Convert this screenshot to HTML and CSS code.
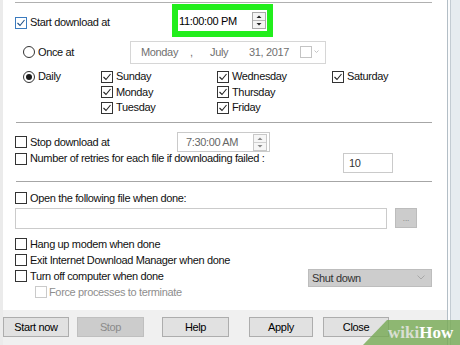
FILE: index.html
```html
<!DOCTYPE html>
<html>
<head>
<meta charset="utf-8">
<link rel="stylesheet" href="styles.css">
</head>
<body>
<div class="screen">
  <div class="gutter"></div>
  <div class="main">
    <div class="panel">
      <div class="rule rule-top"></div>

      <div class="row-start">
        <label class="opt start"><span class="cb focus"><svg viewBox="0 0 10 10"><path d="M1.5 5 L4 7.5 L8.5 2"/></svg></span>Start download at</label>
        <div class="green">
          <span class="time-text">11:00:00 PM</span>
          <svg class="spin" viewBox="0 0 14 17"><rect x="0.5" y="0.5" width="13" height="16" fill="#f4f4f4" stroke="#a8a8a8"/><line x1="1" y1="8.5" x2="13" y2="8.5" stroke="#b8b8b8"/><path d="M4.5 6 L7 3.5 L9.5 6 Z" fill="#222"/><path d="M4.5 11 L7 13.5 L9.5 11 Z" fill="#222"/></svg>
        </div>
      </div>

      <div class="row-once">
        <label class="opt"><span class="rb"></span>Once at</label>
        <div class="date">
          <span class="d-day">Monday</span>
          <span class="d-comma">,</span>
          <span class="d-month">July</span>
          <span class="d-year">31, 2017</span>
          <svg class="cal" viewBox="0 0 20 12"><rect x="0.5" y="0.5" width="11" height="11" fill="none" stroke="#c4c4c4"/><path d="M14.5 4.5 L16.5 6.5 L18.5 4.5" fill="none" stroke="#c4c4c4"/></svg>
        </div>
      </div>

      <div class="days">
        <label class="opt"><span class="rb on"></span>Daily</label>
        <label class="opt"><span class="cb"><svg viewBox="0 0 10 10"><path d="M1.5 5 L4 7.5 L8.5 2"/></svg></span>Sunday</label>
        <label class="opt"><span class="cb"><svg viewBox="0 0 10 10"><path d="M1.5 5 L4 7.5 L8.5 2"/></svg></span>Wednesday</label>
        <label class="opt"><span class="cb"><svg viewBox="0 0 10 10"><path d="M1.5 5 L4 7.5 L8.5 2"/></svg></span>Saturday</label>
        <span></span>
        <label class="opt"><span class="cb"><svg viewBox="0 0 10 10"><path d="M1.5 5 L4 7.5 L8.5 2"/></svg></span>Monday</label>
        <label class="opt"><span class="cb"><svg viewBox="0 0 10 10"><path d="M1.5 5 L4 7.5 L8.5 2"/></svg></span>Thursday</label>
        <span></span>
        <span></span>
        <label class="opt"><span class="cb"><svg viewBox="0 0 10 10"><path d="M1.5 5 L4 7.5 L8.5 2"/></svg></span>Tuesday</label>
        <label class="opt"><span class="cb"><svg viewBox="0 0 10 10"><path d="M1.5 5 L4 7.5 L8.5 2"/></svg></span>Friday</label>
        <span></span>
      </div>

      <div class="rule sep1"></div>

      <div class="row-stop">
        <label class="opt"><span class="cb"></span>Stop download at</label>
        <div class="timebox">
          <span>7:30:00 AM</span>
          <svg class="spin" viewBox="0 0 14 17"><rect x="0.5" y="0.5" width="13" height="16" fill="#f6f6f6" stroke="#c8c8c8"/><line x1="1" y1="8.5" x2="13" y2="8.5" stroke="#d0d0d0"/><path d="M4.5 6 L7 3.5 L9.5 6 Z" fill="#8a8a8a"/><path d="M4.5 11 L7 13.5 L9.5 11 Z" fill="#8a8a8a"/></svg>
        </div>
      </div>

      <div class="row-retry">
        <label class="opt"><span class="cb"></span>Number of retries for each file if downloading failed :</label>
        <div class="num">10</div>
      </div>

      <div class="rule sep2"></div>

      <div class="row-open">
        <label class="opt"><span class="cb"></span>Open the following file when done:</label>
      </div>
      <div class="row-path">
        <div class="path"></div>
        <div class="browse">...</div>
      </div>

      <div class="checks">
        <div class="row-check"><label class="opt"><span class="cb"></span>Hang up modem when done</label></div>
        <div class="row-check"><label class="opt"><span class="cb"></span>Exit Internet Download Manager when done</label></div>
        <div class="row-check">
          <label class="opt"><span class="cb"></span>Turn off computer when done</label>
          <div class="combo"><span>Shut down</span><svg class="chev" viewBox="0 0 8 5"><path d="M0.5 0.5 L4 4 L7.5 0.5" fill="none" stroke="#a8a8a8"/></svg></div>
        </div>
        <div class="row-check row-force"><label class="opt disabled"><span class="cb"></span>Force processes to terminate</label></div>
      </div>
    </div>

    <div class="buttons">
      <div class="btn b-start">Start now</div>
      <div class="btn b-stop">Stop</div>
      <div class="btn b-help">Help</div>
      <div class="btn b-apply">Apply</div>
      <div class="btn b-close">Close</div>
    </div>
  </div>
  <div class="edge"></div>

  <div class="wm">
    <svg class="wm-bg" viewBox="0 0 97 25"><polygon points="0,25 24,0 97,0 97,25" fill="rgba(120,170,86,0.82)"/></svg>
    <span class="wm-text"><span class="wm-wiki">wiki</span><span class="wm-how">How</span></span>
  </div>
</div>
</body>
</html>
```

FILE: styles.css
```css
* { box-sizing: border-box; }

body {
  margin: 0;
  font-family: "Liberation Sans", Arial, sans-serif;
  font-size: 11px;
  letter-spacing: -0.35px;
  color: #111;
}

.screen {
  position: relative;
  width: 460px;
  height: 345px;
  display: flex;
  overflow: hidden;
  background: #f0f0f0;
}

.gutter {
  width: 3px;
  flex: none;
  background: #ebebeb;
}

.main {
  width: 444px;
  flex: none;
  display: flex;
  flex-direction: column;
}

.panel {
  height: 310px;
  flex: none;
  background: #fff;
  padding: 0 15px 0 12px;
  display: flex;
  flex-direction: column;
}

.edge {
  flex: 1;
  background: linear-gradient(to right, #b3bec6 0 1px, #fbfcfd 1px 3px, #c3ccd3 3px 4px, #e6ecf0 4px);
}

/* rules */
.rule {
  flex: none;
  height: 1px;
  width: 416px;
  margin-left: 1px;
  background: #a6a6a6;
}
.rule-top { margin-top: 2px; margin-left: 0; width: 417px; background: #b0b0b0; }
.sep1 { margin-top: 6.5px; }
.sep2 { margin-top: 7px; }

/* options */
.opt {
  display: flex;
  align-items: center;
  gap: 3px;
  white-space: nowrap;
  line-height: 13px;
}
.cb {
  width: 12px;
  height: 12px;
  flex: none;
  border: 1px solid #333;
  background: #fff;
  display: flex;
  align-items: center;
  justify-content: center;
}
.cb svg { width: 10px; height: 10px; }
.cb svg path { fill: none; stroke: #222; stroke-width: 1.1; }
.cb.focus { border-color: #3b7bbf; }
.cb.focus svg path { stroke: #1d4f86; }

.rb {
  width: 12px;
  height: 12px;
  flex: none;
  border: 1px solid #333;
  border-radius: 50%;
  background: #fff;
  display: flex;
  align-items: center;
  justify-content: center;
}
.rb.on::after {
  content: "";
  width: 6px;
  height: 6px;
  border-radius: 50%;
  background: #1a1a1a;
}

.disabled { color: #8e8e8e; }
.disabled .cb { border-color: #cacaca; }

/* row 1 */
.row-start {
  flex: none;
  height: 35px;
  display: grid;
  grid-template-columns: 157px 101px;
  align-items: center;
}
.start { margin-top: 4px; }
.green {
  width: 101px;
  height: 33px;
  border: 6px solid #22ee1c;
  background: #fff;
  display: flex;
  align-items: center;
  justify-content: space-between;
  padding: 0 1px 0 1px;
  color: #000;
}
.spin { width: 14px; height: 17px; display: block; }

/* row 2 */
.row-once {
  flex: none;
  height: 28px;
  display: grid;
  grid-template-columns: 107px 196px;
  padding-left: 8px;
  align-items: center;
}
.date {
  height: 23px;
  border: 1px solid #d6d6d6;
  display: flex;
  align-items: center;
  padding-left: 10px;
  color: #707070;
}
.d-day { width: 49px; }
.d-comma { width: 20px; }
.d-month { width: 39px; }
.d-year { width: 51px; }
.cal { width: 20px; height: 12px; display: block; }

/* days */
.days {
  flex: none;
  margin-top: 3px;
  display: grid;
  grid-template-columns: 78px 116px 115px auto;
  grid-auto-rows: 15.5px;
  padding-left: 8px;
  align-items: center;
}

/* stop */
.row-stop {
  flex: none;
  margin-top: 9px;
  height: 20px;
  display: grid;
  grid-template-columns: 162px 93px;
  align-items: center;
}
.timebox {
  height: 20px;
  border: 1px solid #cacaca;
  display: flex;
  align-items: center;
  justify-content: space-between;
  padding: 0 2px 0 8px;
  color: #666;
}

.row-retry {
  flex: none;
  height: 22px;
  display: grid;
  grid-template-columns: 328px 50px;
  align-items: start;
}
.num {
  margin-top: 1px;
  height: 20px;
  border: 1px solid #cacaca;
  padding: 2px 5px;
  line-height: 14px;
  color: #333;
}

/* open file */
.row-open {
  flex: none;
  margin-top: 6px;
  height: 20px;
  display: flex;
  align-items: center;
}
.row-path {
  flex: none;
  height: 21px;
  display: flex;
  align-items: flex-start;
}
.path {
  width: 372px;
  height: 21px;
  border: 1px solid #cbcbcb;
  background: #fff;
}
.browse {
  margin-left: 8px;
  width: 22px;
  height: 20px;
  background: #cccccc;
  border: 1px solid #bcbcbc;
  color: #777;
  font-size: 8px;
  letter-spacing: 0;
  display: flex;
  align-items: center;
  justify-content: center;
}

/* checks */
.checks {
  flex: none;
  margin-top: 7px;
  display: flex;
  flex-direction: column;
}
.row-check {
  height: 16px;
  display: flex;
  align-items: center;
}
.row-force { padding-left: 20px; }
.row-force .opt { gap: 2px; }
.combo {
  margin-left: auto;
  margin-top: 3px;
  width: 124px;
  height: 18px;
  background: #cdcdcd;
  border: 1px solid #bdbdbd;
  display: flex;
  align-items: center;
  justify-content: space-between;
  padding: 0 6px 0 3px;
  color: #333;
}
.chev { width: 8px; height: 5px; display: block; }

/* buttons */
.buttons {
  flex: 1;
  display: flex;
  align-items: flex-start;
  padding-top: 7px;
}
.btn {
  height: 20px;
  width: 66px;
  border: 1px solid #adadad;
  background: #e1e1e1;
  display: flex;
  align-items: center;
  justify-content: center;
  color: #000;
}
.b-stop { margin-left: 8px; width: 67px; background: #cccccc; border-color: #bfbfbf; color: #8a8a8a; }
.b-help { margin-left: 18px; width: 67px; }
.b-apply { margin-left: 20px; width: 64px; }
.b-close { margin-left: 10px; }

/* watermark */
.wm {
  position: absolute;
  right: 0;
  bottom: 0;
  width: 97px;
  height: 25px;
}
.wm-bg { position: absolute; left: 0; top: 0; width: 97px; height: 25px; display: block; }
.wm-text {
  position: absolute;
  left: 25px;
  top: 3px;
  font-family: "Liberation Serif", "Times New Roman", serif;
  font-weight: bold;
  font-size: 17px;
  line-height: 20px;
  letter-spacing: 0;
}
.wm-wiki { color: #d9dfd3; }
.wm-how { color: #ffffff; }
```
